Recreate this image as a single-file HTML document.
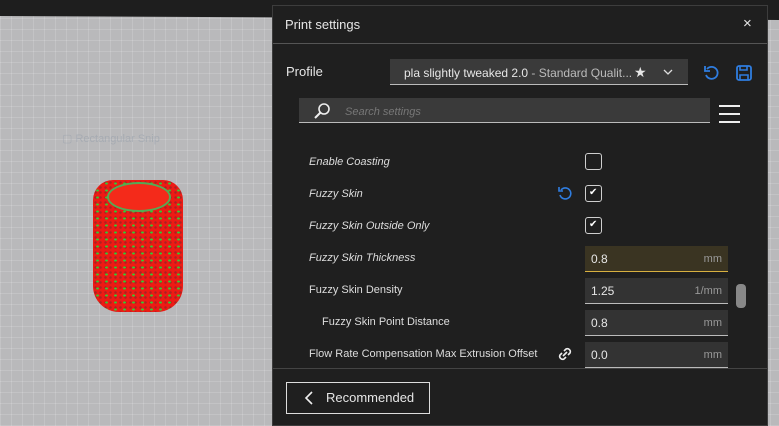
<!DOCTYPE html>
<html><head><meta charset="utf-8"><style>
*{box-sizing:border-box;margin:0;padding:0}
body{width:779px;height:426px;overflow:hidden;background:#b4b4b6;font-family:"Liberation Sans",sans-serif;position:relative}
.vp{position:absolute;left:0;top:0;width:779px;height:426px;background:
repeating-linear-gradient(90deg,rgba(255,255,255,.15) 0 1px,transparent 1px 11px),
repeating-linear-gradient(0deg,rgba(255,255,255,.15) 0 1px,transparent 1px 11px),#b9b9bb}
.top{position:absolute;left:0;top:0;width:779px;height:20px;background:#1e1e1e;clip-path:polygon(0 0,100% 0,100% 100%,0 80%)}
.cyl{position:absolute;left:93px;top:180px;width:90px;height:132px;border-radius:20px 20px 26px 26px;
background-image:radial-gradient(#3c3 1.2px,transparent 1.6px),radial-gradient(#a22 1px,transparent 1.5px);background-size:9px 7px,5px 5px;background-color:#ee1a14}
.cyl:before{content:"";position:absolute;left:14px;top:2px;width:60px;height:26px;border-radius:50%;background:#f42a1a;border:2px solid #5a5}
.panel{position:absolute;left:272px;top:5px;width:496px;height:421px;background:#1f1f1f;border:1px solid #3d3d3d;color:#e6e6e6}
.t{position:absolute;white-space:nowrap}
.hl{position:absolute;left:0;width:494px;height:1px;background:#555}
.cb{position:absolute;left:312px;width:17px;height:17px;border:1px solid #cfcfcf;border-radius:3px}
.cb.c:after{content:"✔";position:absolute;left:3px;top:1px;font-size:10px;color:#fff}
.inp{position:absolute;left:312px;width:143px;height:26px;background:#333;border-bottom:1px solid #bbb;font-size:12px}
.inp span{position:absolute;top:6px}
.inp span.u{top:7px;right:6px;color:#999;font-size:11px}
.lbl{position:absolute;font-size:11px;color:#ddd;white-space:nowrap}
</style></head><body>
<div class="vp"></div><div class="top"></div>
<div class="cyl"></div>
<div class="t" style="left:62px;top:132px;font-size:11px;color:#9aa2ad;opacity:.6">▢ Rectangular Snip</div>
<div class="panel">
 <div class="t" style="left:12px;top:11px;font-size:13px">Print settings</div>
 <div class="t" style="left:470px;top:9px;font-size:15px">×</div>
 <div class="hl" style="top:37px"></div>
 <div class="t" style="left:13px;top:58px;font-size:13px">Profile</div>
 <div style="position:absolute;left:117px;top:53px;width:298px;height:26px;background:#3a3a3a;border-bottom:1px solid #bbb"></div>
 <div class="t" style="left:131px;top:60px;font-size:12px">pla slightly tweaked 2.0 <span style="color:#bbb">- Standard Qualit...</span></div>
 <div class="t" style="left:361px;top:58px;font-size:14px">★</div>
 <svg style="position:absolute;left:389px;top:62px" width="12" height="8"><path d="M2 2l4 4 4-4" stroke="#ddd" fill="none" stroke-width="1.3"/></svg>
 <svg style="position:absolute;left:429px;top:58px" width="18" height="18"><path d="M5 5a6 6 0 1 1-1 6" stroke="#2f7de0" fill="none" stroke-width="1.8"/><path d="M3 2v5h5" stroke="#2f7de0" fill="none" stroke-width="1.8"/></svg>
 <svg style="position:absolute;left:462px;top:58px" width="18" height="18"><rect x="2" y="2" width="14" height="14" rx="2" stroke="#2f7de0" fill="none" stroke-width="1.8"/><path d="M5 2v4h7V2M5 16v-5h8v5" stroke="#2f7de0" fill="none" stroke-width="1.6"/></svg>
 <div style="position:absolute;left:26px;top:92px;width:411px;height:25px;background:#3a3a3a;border-bottom:1px solid #bbb"></div>
 <svg style="position:absolute;left:40px;top:96px" width="18" height="18"><circle cx="11" cy="7" r="5" stroke="#eee" fill="none" stroke-width="1.6"/><path d="M7.5 10.5L2 16" stroke="#eee" stroke-width="2"/></svg>
 <div class="t" style="left:72px;top:100px;font-size:11px;color:#777;font-style:italic">Search settings</div>
 <div style="position:absolute;left:446px;top:99px;width:21px;height:2px;background:#eee;box-shadow:0 8px 0 #eee,0 16px 0 #eee"></div>
 <div class="lbl" style="left:36px;top:150px;font-style:italic">Enable Coasting</div>
 <div class="cb" style="top:147px"></div>
 <div class="lbl" style="left:36px;top:182px;font-style:italic">Fuzzy Skin</div>
 <svg style="position:absolute;left:284px;top:180px" width="16" height="16"><path d="M4 4a5.5 5.5 0 1 1-1 5" stroke="#2f7de0" fill="none" stroke-width="1.6"/><path d="M2 1v4h4" stroke="#2f7de0" fill="none" stroke-width="1.6"/></svg>
 <div class="cb c" style="top:179px"></div>
 <div class="lbl" style="left:36px;top:214px;font-style:italic">Fuzzy Skin Outside Only</div>
 <div class="cb c" style="top:211px"></div>
 <div class="lbl" style="left:36px;top:246px;font-style:italic">Fuzzy Skin Thickness</div>
 <div class="inp" style="top:240px;background:#3a3422;border-bottom-color:#d8b040"><span style="left:6px">0.8</span><span class="u">mm</span></div>
 <div class="lbl" style="left:36px;top:278px">Fuzzy Skin Density</div>
 <div class="inp" style="top:272px"><span style="left:6px">1.25</span><span class="u">1/mm</span></div>
 <div class="lbl" style="left:49px;top:310px">Fuzzy Skin Point Distance</div>
 <div class="inp" style="top:304px"><span style="left:6px">0.8</span><span class="u">mm</span></div>
 <div class="lbl" style="left:36px;top:342px">Flow Rate Compensation Max Extrusion Offset</div>
 <svg style="position:absolute;left:284px;top:340px" width="16" height="16"><path d="M7 5l2-2a3 3 0 0 1 4 4l-2 2M9 11l-2 2a3 3 0 0 1-4-4l2-2M6 10l4-4" stroke="#eee" fill="none" stroke-width="1.6"/></svg>
 <div class="inp" style="top:336px"><span style="left:6px">0.0</span><span class="u">mm</span></div>
 <div style="position:absolute;left:463px;top:278px;width:10px;height:24px;border-radius:4px;background:#888"></div>
 <div class="hl" style="top:362px;background:#444"></div>
 <div style="position:absolute;left:13px;top:376px;width:144px;height:32px;border:1px solid #ddd"></div>
 <svg style="position:absolute;left:30px;top:384px" width="12" height="16"><path d="M9 2L3 8l6 6" stroke="#eee" fill="none" stroke-width="1.6"/></svg>
 <div class="t" style="left:53px;top:384px;font-size:13px">Recommended</div>
</div>
</body></html>
